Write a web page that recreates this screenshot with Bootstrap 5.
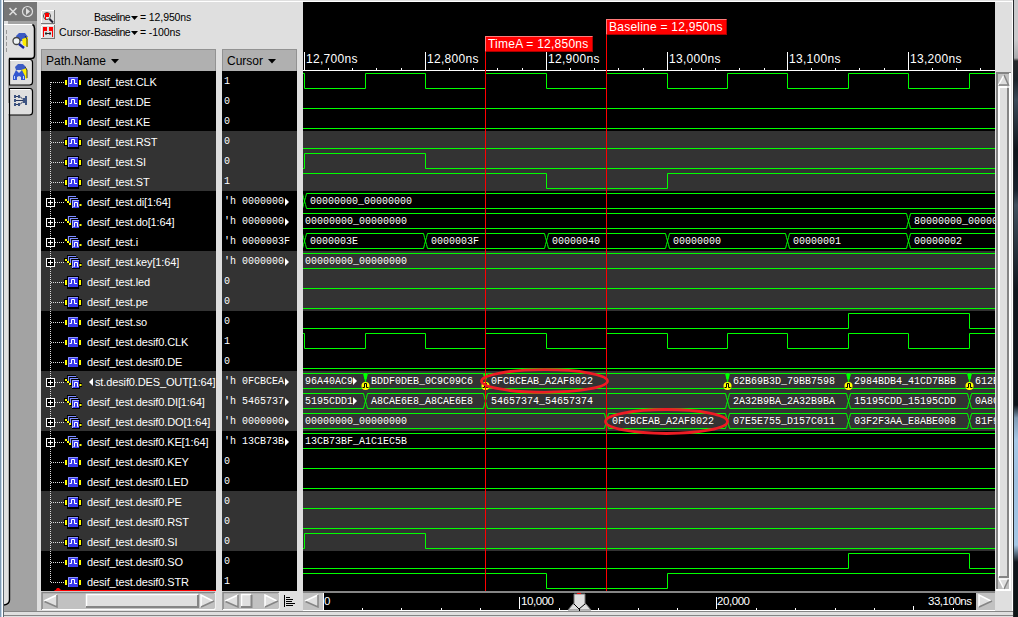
<!DOCTYPE html>
<html lang="en">
<head>
  <meta charset="UTF-8" />
  <title>Waveform Viewer</title>
  <link rel="stylesheet" href="https://cdn.jsdelivr.net/npm/bootstrap@5.3.3/dist/css/bootstrap.min.css" />
  <style>
    body { width: 1018px; height: 617px; background: #dfdfdf; color: #000; font-family: "Liberation Sans", Arial, sans-serif; font-size: 11px; line-height: 1; }
    svg { display: block; flex: none; }
    svg text { white-space: pre; }

    .edge-left { width: 4px; background: linear-gradient(90deg, #7e98b0 0 1px, #c3d9ec 1px 2px, #fff 2px 3px, #5b6670 3px); }
    .edge-right { width: 5px; border-left: 1px solid #26292c; background: linear-gradient(#c9c9cb 0 40px, #a9aaad 58px, #26292c 61px, #1c242b 80px, #3b4a58 100px, #0f151b 150px, #18222d 190px, #41505e 205px, #10171e 290px, #0d1319 405px, #7f9ab3 418px, #a7c8e6 440px, #9fc0df 480px, #a4c6e4 545px, #10161c 562px, #0c1415); }
    .window-top { height: 2px; border-bottom: 1px solid #fff; }
    .work-area { height: 609px; }
    .status-edge { height: 6px; border-top: 1px solid #858585; box-shadow: inset 0 -1px #dfdfdf, inset 0 -2px #858585; }

    .side-tabs { width: 33px; }
    .left-pane { width: 266px; padding-left: 4px; }
    .time-info { height: 47px; padding-top: 8px; font-size: 10.5px; }
    .time-info .info-line { height: 15px; }
    .info-line .lbl { width: 74px; text-align: right; white-space: nowrap; }
    .base-word { letter-spacing: -.55px; }
    .base-value { letter-spacing: -.1px; }

    .names-col { width: 175px; }
    .values-col { width: 75px; }
    .col-head { height: 22px; background: #b0b0b0; border: 1px solid #929292; border-bottom-width: 0; font-size: 12px; padding-left: 4px; }
    .sig-list { height: 520px; background: #000; color: #fff; }
    .sig-row { height: 20px; }
    .sig-row.shaded, .wave-row.shaded { background: #333; }
    .sig-name { padding-top: 2px; letter-spacing: -.13px; white-space: nowrap; }
    .sig-value { font: 10px/1 "Liberation Mono", monospace; padding: 1px 0 0 2px; white-space: pre; }
    .bottom-bar { height: 20px; }

    .wave-pane { width: 692px; }
    .ruler { height: 69px; background: #000; }
    .wave-list { height: 520px; background: #000; }
    .wave-row { height: 20px; }
    .flag { height: 16px; background: #f00; color: #fff; font-size: 12px; line-height: 15px; padding-left: 2px; border: 1px solid; border-color: #ff7a7a #a00 #a00 #ff7a7a; letter-spacing: .24px; white-space: nowrap; }
    .flag-a { left: 182px; top: 34px; width: 108px; }
    .flag-base { left: 303px; top: 17px; width: 121px; }
    .annot { left: 0; top: 0; }
    .right-scroll { width: 18px; }
  </style>
</head>
<body class="d-flex overflow-hidden">

  <div class="edge-left flex-shrink-0"></div>

  <main class="flex-grow-1">
    <div class="window-top"></div>

    <div class="work-area d-flex">

      <nav class="side-tabs flex-shrink-0">
        <svg width="33" height="609">
          <rect width="33" height="609" fill="#a3a3a3" />
          <rect width="33" height="19" fill="#777" />
          <path d="M0 19h4v82h1v496q0 6-5 6z" fill="#dfdfdf" />
          <path d="M5.5 112V598q0 4-5.5 5" fill="none" stroke="#000" stroke-width="1.4" />

          <path d="M5.500 6l7 7M12.500 6l-7 7" stroke="#dedede" stroke-width="1.6" />
          <circle cx="23.5" cy="9.5" r="5" fill="none" stroke="#dedede" stroke-width="1.2" />
          <path d="M22 6l4 3.5-4 3.5z" fill="#dedede" />

          <path d="M0 22.5h28q2.5 0 2.5 3V53q0 3.5-3 3.5H0z" fill="#dfdfdf" />
          <path d="M0 22.5h28" stroke="#fff" />
          <path d="M28.5 22.5q2 1 2 4V53q0 3.5-3 3.5H5" fill="none" stroke="#000" stroke-width="1.5" />
          <path d="M5.5 57.5H26q2.5 0 2.5 3V80q0 3-3 3H5.5z" fill="#dfdfdf" stroke="#000" stroke-width="1.2" />
          <path d="M6 58.5h20" stroke="#fff" />
          <path d="M5.5 86.5H26q2.5 0 2.5 3V110q0 3-3 3H5.5z" fill="#dfdfdf" stroke="#000" stroke-width="1.2" />
          <path d="M6 87.5h20" stroke="#fff" />
          <path d="M2.5 28v24" stroke="#999" stroke-dasharray="4 2" />

          <path d="M12 34l3-3h6l3 4-3 4h-7z" fill="#3c5bc4" />
          <path d="M18 37l6-2v10l-5-2z" fill="#ffef00" /><path d="M21 34l2 3v8" fill="none" stroke="#333" />
          <circle cx="12.5" cy="39" r="3.5" fill="#eef3f5" stroke="#444" stroke-width="1.3" />
          <path d="M15 42l5 4" stroke="#1526a0" stroke-width="2.5" />

          <path d="M11 65l3-3h5l3 3-2 3h-8z" fill="#3c5bc4" />
          <path d="M17 68l6-2v11l-6-3z" fill="#ffef00" /><path d="M21 65l2 3v8" fill="none" stroke="#333" />
          <path d="M9 78v-4l3-6 3 3 3-3 3 6v4h-4v-3l-2-1-2 1v3z" fill="#3357cf" />
          <path d="M10.500 77v-3M19.500 77v-3" stroke="#b5d2ff" />

          <path d="M10 94.5h6l3 3M10 98.500h9M10 102.5h6l3-3" fill="none" stroke="#28385f" />
          <path d="M10 93h2v3h-2zM10 97h2v3h-2zM10 101h2v3h-2zM14 93h2v3h-2zM14 101h2v3h-2zM19 96h4v5h-4zM21 94h2v9h-2z" fill="#3d5482" />
        </svg>
      </nav>

      <section class="left-pane flex-shrink-0">
        <div class="time-info">
          <div class="info-line d-flex align-items-center">
            <svg width="15" height="15">
              <rect x=".5" y=".5" width="13" height="13" fill="#dfdfdf" stroke="#777" /><path d="M.5 13V.5H13" fill="none" stroke="#fff" />
              <circle cx="6" cy="6" r="3.5" fill="#eee" stroke="#444" /><path d="M8.5 9l3.5 3.5" stroke="#223" stroke-width="2" />
              <path d="M4 10V3h4v4H5v3z" fill="#f00" />
            </svg>
            <span class="lbl base-word">Baseline</span>
            <svg width="10" height="10"><path d="M1 3h7l-3.5 4z" /></svg>
            <span class="base-value">= 12,950ns</span>
          </div>
          <div class="info-line d-flex align-items-center">
            <svg width="15" height="15">
              <rect x=".5" y=".5" width="13" height="13" fill="#dfdfdf" stroke="#777" /><path d="M.5 13V.5H13" fill="none" stroke="#fff" />
              <path d="M2 12V2h4v4H3v6zM11 12V6H8V2h4v10z" fill="#f00" /><path d="M4 8.5h6M5 7v3M9 7v3" stroke="#222" />
            </svg>
            <span class="lbl">Cursor-<span class="base-word">Baseline</span></span>
            <svg width="10" height="10"><path d="M1 3h7l-3.5 4z" /></svg>
            <span class="base-value">= -100ns</span>
          </div>
        </div>

        <div class="d-flex">
          <div class="names-col me-auto">
            <div class="col-head d-flex align-items-center">Path.Name
              <svg class="ms-1" width="10" height="10"><path d="M1 3h8l-4 4.5z" /></svg>
            </div>
            <div class="sig-list position-relative overflow-hidden">
              <div id="names"></div>
              <svg class="position-absolute bottom-0 start-0" width="175" height="4">
                <path d="M14 3h161v1H13zM14 4l2-3h2l3 3z" fill="#f00" />
              </svg>
            </div>
          </div>
          <div class="values-col me-auto">
            <div class="col-head d-flex align-items-center">Cursor
              <svg class="ms-1" width="10" height="10"><path d="M1 3h8l-4 4.5z" /></svg>
            </div>
            <div class="sig-list" id="values"></div>
          </div>
        </div>

        <div class="bottom-bar">
          <svg width="262" height="20">
            <rect x="1" y="2" width="173" height="17" fill="#c1c1c1" />
            <path d="M1 19V1.5h173" fill="none" stroke="#858585" stroke-width="1.5" /><path d="M1 18.5h173V2" fill="none" stroke="#fff" />
            <use href="#arrowLeft" x="2" y="3" />
            <rect x="45" y="3.5" width="112" height="13" fill="#dfdfdf" /><path d="M45.5 16V3.5H157" fill="none" stroke="#fff" stroke-width="1.5" /><path d="M45 16h112V4" fill="none" stroke="#858585" stroke-width="2" />
            <use href="#arrowRight" x="158" y="3" />

            <rect x="182" y="2" width="56" height="17" fill="#c1c1c1" />
            <path d="M182 19V1.5h56" fill="none" stroke="#858585" stroke-width="1.5" /><path d="M182 18.5h56V2" fill="none" stroke="#fff" />
            <use href="#arrowLeft" x="183" y="3" />
            <rect x="200" y="3.5" width="10" height="13" fill="#dfdfdf" /><path d="M200.5 16V3.5H210" fill="none" stroke="#fff" stroke-width="1.5" /><path d="M200 16h10.5V4" fill="none" stroke="#858585" stroke-width="2" />
            <use href="#arrowRight" x="222" y="3" />
            <path d="M243.5 4v12M245 6.5h4M245 8.5h7M245 10.5h6M245 12.5h9M245 14.5h7" stroke="#000" />
          </svg>
        </div>
      </section>

      <section class="wave-pane flex-shrink-0 position-relative">
        <div class="ruler"><svg id="ruler" width="692" height="69"></svg></div>
        <div class="wave-list" id="waves"></div>
        <svg id="timeline" width="692" height="20"></svg>

        <svg class="annot position-absolute" width="692" height="589">
          <path d="M182.5 50V589M303.5 33V589" stroke="#f00" />
          <g fill="none" stroke="#ed1c24" stroke-width="2.8">
            <ellipse cx="241.5" cy="379" rx="63" ry="11.3" />
            <ellipse cx="363.5" cy="419.5" rx="61" ry="12" />
          </g>
        </svg>
        <div class="flag flag-a position-absolute">TimeA = 12,850ns</div>
        <div class="flag flag-base position-absolute">Baseline = 12,950ns</div>
      </section>

      <div class="right-scroll flex-shrink-0">
        <svg width="18" height="609">
          <path d="M17.5 0v609" stroke="#fff" />
          <rect x="1" y="70" width="15" height="518" fill="#858585" />
          <rect x="3" y="72" width="11" height="515" fill="#c1c1c1" />
          <path d="M15 71v517M1 588h15" stroke="#fff" stroke-width="2" />
          <path d="M9 73l-5.5 10h10.5z" fill="#dfdfdf" /><path d="M9 73L3.5 83" stroke="#fff" stroke-width="1.5" /><path d="M9 73l4.5 10H4" fill="none" stroke="#858585" stroke-width="1.5" />
          <rect x="3" y="84" width="11" height="492" fill="#dfdfdf" />
          <path d="M4 575V85h8" fill="none" stroke="#fff" stroke-width="2" /><path d="M13 86v489H4" fill="none" stroke="#858585" stroke-width="2" />
          <path d="M3 576h11v11H3z" fill="#c1c1c1" />
          <path d="M4 577h10l-5 10z" fill="#dfdfdf" /><path d="M9 587L4 577h10" fill="none" stroke="#fff" stroke-width="1.5" /><path d="M13.5 577.5L9 587" stroke="#858585" stroke-width="1.5" />
        </svg>
      </div>
    </div>

    <div class="status-edge"></div>
  </main>

  <div class="edge-right flex-shrink-0"></div>

  <!-- shared icons -->
  <svg width="0" height="0" class="position-absolute">
    <symbol id="arrowLeft" width="16" height="14" viewBox="0 0 16 14">
      <rect width="16" height="14" fill="#c1c1c1" /><path d="M1 7L14 1v12z" fill="#dfdfdf" />
      <path d="M1 7L14 1" stroke="#fff" stroke-width="1.5" /><path d="M1.5 7.5L14 13V1" fill="none" stroke="#858585" stroke-width="1.5" />
    </symbol>
    <symbol id="arrowRight" width="16" height="14" viewBox="0 0 16 14">
      <rect width="16" height="14" fill="#c1c1c1" /><path d="M15 7L2 1v12z" fill="#dfdfdf" />
      <path d="M2 13V1l12 6" fill="none" stroke="#fff" stroke-width="1.5" /><path d="M2 13l13-6" stroke="#858585" stroke-width="1.5" />
    </symbol>
    <symbol id="bitIcon" width="20" height="20" viewBox="0 0 20 20">
      <path d="M3 5h12v3h3v7h-3v3H3v-3H0V8h3z" fill="#000" />
      <path d="M1 9h2v5H1zM15 9h2v5h-2z" fill="#ffff00" />
      <rect x="4" y="6" width="10" height="10" fill="#3a3af0" />
      <path d="M4.5 16V6.5H14" fill="none" stroke="#8c96ff" />
      <path d="M5.500 12.5h2v-4h3v4h2.500" fill="none" stroke="#fff" />
    </symbol>
    <symbol id="busIcon" width="20" height="20" viewBox="0 0 20 20">
      <path d="M3 4h9v2h2v2h2v4h2v4h-2v2H8v-3H6v-2H4v-2H0V7h3z" fill="#000" />
      <path d="M1 8h2v2H1zM3 10h2v2H3zM5 12h2v2H5zM15.500 13h2v2h-2z" fill="#ffff00" />
      <path d="M4.5 10V5.5H12M6.5 12V7.5H14" fill="none" stroke="#7d8cff" stroke-width="1.2" />
      <rect x="8" y="9" width="7" height="8" fill="#3a3af0" />
      <path d="M8.5 17V9.5H15" fill="none" stroke="#a8b2ff" />
      <path d="M9.5 15.5h1v-4h3v4h1" fill="none" stroke="#fff" />
    </symbol>
  </svg>

  <script src="https://cdn.jsdelivr.net/npm/bootstrap@5.3.3/dist/js/bootstrap.bundle.min.js"></script>
  <script>
    // x position of every 50ns step inside the wave pane
    const X = { 12700: 1, 12750: 62, 12800: 122, 12850: 182, 12900: 243, 12950: 303, 13000: 364, 13050: 424, 13100: 484, 13150: 545, 13200: 605, 13250: 666 };
    const W = 692;
    const clock = Object.keys(X);
    const zeros = '00000000_00000000';

    // bit: [name, value, start level, toggle times]   bus: [name, value, [[time, text], ...]]
    const signals = [
      ['desif_test.CLK', '1', 1, clock],
      ['desif_test.DE', '0', 0, []],
      ['desif_test.KE', '0', 0, []],
      ['desif_test.RST', '0', 0, []],
      ['desif_test.SI', '0', 0, [12700, 12800]],
      ['desif_test.ST', '1', 1, [12900, 13000]],
      ['desif_test.di[1:64]', "'h 0000000>", [[12700, zeros]]],
      ['desif_test.do[1:64]', "'h 0000000>", [[0, zeros], [13200, '80000000_00000']]],
      ['desif_test.i', "'h 0000003F", [[12700, '0000003E'], [12800, '0000003F'], [12900, '00000040'], [13000, '00000000'], [13100, '00000001'], [13200, '00000002']]],
      ['desif_test.key[1:64]', "'h 0000000>", [[0, zeros]]],
      ['desif_test.led', '0', 0, []],
      ['desif_test.pe', '0', 0, []],
      ['desif_test.so', '0', 0, [13150, 13250]],
      ['desif_test.desif0.CLK', '1', 1, clock],
      ['desif_test.desif0.DE', '0', 0, []],
      ['<st.desif0.DES_OUT[1:64]', "'h 0FCBCEA>", [[0, '96A40AC9>'], [12750, 'BDDF0DEB_0C9C09C6'], [12850, '0FCBCEAB_A2AF8022'], [13050, '62B69B3D_79BB7598'], [13150, '2984BDB4_41CD7BBB'], [13250, '612E']]],
      ['desif_test.desif0.DI[1:64]', "'h 5465737>", [[0, '5195CDD1>'], [12750, 'A8CAE6E8_A8CAE6E8'], [12850, '54657374_54657374'], [13050, '2A32B9BA_2A32B9BA'], [13150, '15195CDD_15195CDD'], [13250, '0A8C']]],
      ['desif_test.desif0.DO[1:64]', "'h 0000000>", [[0, zeros], [12950, '0FCBCEAB_A2AF8022'], [13050, '07E5E755_D157C011'], [13150, '03F2F3AA_E8ABE008'], [13250, '81F9']]],
      ['desif_test.desif0.KE[1:64]', "'h 13CB73B>", [[0, '13CB73BF_A1C1EC5B']]],
      ['desif_test.desif0.KEY', '0', 0, []],
      ['desif_test.desif0.LED', '0', 0, []],
      ['desif_test.desif0.PE', '0', 0, []],
      ['desif_test.desif0.RST', '0', 0, []],
      ['desif_test.desif0.SI', '0', 0, [12700, 12800]],
      ['desif_test.desif0.SO', '0', 0, [13150, 13250]],
      ['desif_test.desif0.STR', '1', 1, [12900, 13000]]
    ];

    const more = '<svg width="5" height="8"><path d="M1 0l4 4-4 4z" fill="#fff"/></svg>';
    const less = '<svg width="8" height="8"><path d="M6 0L2 4l4 4z" fill="#fff"/></svg>';

    function treeCell(isBus, i) {
      const top = i === 0 ? 11 : 0;
      const bottom = i === signals.length - 1 ? 12 : 20;
      let s = `<path d="M9.5 ${top}V${bottom}M10 11.5H23" stroke="#ddd" stroke-dasharray="1 1" fill="none"/>`;
      if (isBus) {
        s += '<rect x="5.5" y="7.5" width="8" height="8" fill="#000" stroke="#fff"/><path d="M7 11.5h5M9.5 9v5" stroke="#fff"/>';
      }
      return `<svg width="46" height="20">${s}<use href="#${isBus ? 'busIcon' : 'bitIcon'}" x="23" y="0"/></svg>`;
    }

    function bitPath(level, toggles) {
      const y = l => l ? 2.5 : 17.5;
      let d = `M0 ${y(level)}`;
      toggles.forEach(t => {
        level = 1 - level;
        d += `H${X[t] + .5}V${y(level)}`;
      });
      return `<path d="${d}H${W}" fill="none" stroke="#0f0"/>`;
    }

    function busPath(segs, glitch) {
      let out = '';
      segs.forEach(([t, text], i) => {
        const x = t ? X[t] + .5 : 0;
        const end = i + 1 < segs.length ? X[segs[i + 1][0]] - 1.5 : W;
        const from = t ? x + 2 : 0;
        out += `<path d="M${from} 2.5H${end}M${from} 17.5H${end}" stroke="#0f0"/>`;
        if (t) {
          out += `<path d="M${x - 2} 2.5l1 4 2 7 1 4M${x + 2} 2.5l-1 4-2 7-1 4" fill="none" stroke="#0f0"/>`;
        }
        const tx = t ? x + 5.5 : 2;
        const label = text.replace('>', '');
        out += `<text x="${tx}" y="13" fill="#fff" font-family="Liberation Mono, monospace" font-size="10">${label}</text>`;
        if (label !== text) {
          const ax = tx + label.length * 6;
          out += `<path d="M${ax} 6l4 4-4 4z" fill="#fff"/>`;
        }
        if (glitch && t) {
          out += `<path d="M${x - 1.5} 2h3v5l-1.5 2-1.5-2z" fill="#0f0"/><circle cx="${x}" cy="15" r="4" fill="#ff0"/><path d="M${x - 3} 16.5h2v-4h2v4h2" fill="none" stroke="#000"/>`;
        }
      });
      return out;
    }

    let names = '', values = '', waves = '';
    signals.forEach((sig, i) => {
      const isBus = Array.isArray(sig[2]);
      const shade = Math.floor(i / 3) % 2 ? ' shaded' : '';
      const name = sig[0].startsWith('<') ? less + sig[0].slice(1) : sig[0];
      const value = sig[1].endsWith('>') ? sig[1].slice(0, -1) + more : sig[1];
      names += `<div class="sig-row d-flex align-items-center${shade}">${treeCell(isBus, i)}<span class="sig-name d-flex align-items-center">${name}</span></div>`;
      values += `<div class="sig-row sig-value d-flex align-items-center${shade}">${value}</div>`;
      waves += `<div class="wave-row${shade}"><svg width="${W}" height="20">${isBus ? busPath(sig[2], sig[0].includes('DES_OUT')) : bitPath(sig[2], sig[3])}</svg></div>`;
    });
    document.getElementById('names').innerHTML = names;
    document.getElementById('values').innerHTML = values;
    document.getElementById('waves').innerHTML = waves;

    // top ruler: a labelled tick per 100ns, four small ones between
    let ruler = `<path d="M0 68.5H${W}" stroke="#fff"/>`;
    [12700, 12800, 12900, 13000, 13100, 13200].forEach(t => {
      const x = X[t] + .5;
      ruler += `<path d="M${x} 50V69" stroke="#fff"/><text x="${x + 1.5}" y="61" fill="#fff" font-size="12" textLength="51.5">${t.toLocaleString('en-US')}ns</text>`;
      for (let k = 1; k < 5; k++) {
        ruler += `<path d="M${Math.round(X[t] + k * 24.15) + .5} 66v3" stroke="#fff"/>`;
      }
    });
    document.getElementById('ruler').innerHTML = ruler;

    // overview bar under the waves
    let bar = '<rect width="692" height="20" fill="#c1c1c1"/><rect width="692" height="2" fill="#858585"/><rect x="20" y="2" width="653" height="17" fill="#000"/><path d="M0 19.5h692" stroke="#fff"/>';
    bar += '<use href="#arrowLeft" x="1" y="3"/><use href="#arrowRight" x="674" y="3"/><path d="M20.5 2v17" stroke="#fff"/>';
    [59, 98, 138, 177, 256, 295, 335, 374, 453, 492, 532, 571, 650].forEach(x => {
      bar += `<path d="M${x + .5} 17v2" stroke="#fff"/>`;
    });
    bar += '<path d="M216.5 6v12M413.5 6v12M610.5 15v4" stroke="#fff"/>';
    bar += '<g fill="#fff" font-size="11.5"><text x="21" y="14">0</text><text x="218" y="14" textLength="33">10,000</text><text x="414" y="14" textLength="33">20,000</text><text x="625" y="14" textLength="44">33,100ns</text></g>';
    bar += '<path d="M265 19l5-6h1V3h11v10h1l5 6z" fill="#dfdfdf" stroke="#777"/><path d="M271 13l5 5 6-5M276.5 18v2" fill="none" stroke="#000"/><path d="M274 2.5h4" stroke="#f00"/>';
    document.getElementById('timeline').innerHTML = bar;
  </script>

</body>
</html>
